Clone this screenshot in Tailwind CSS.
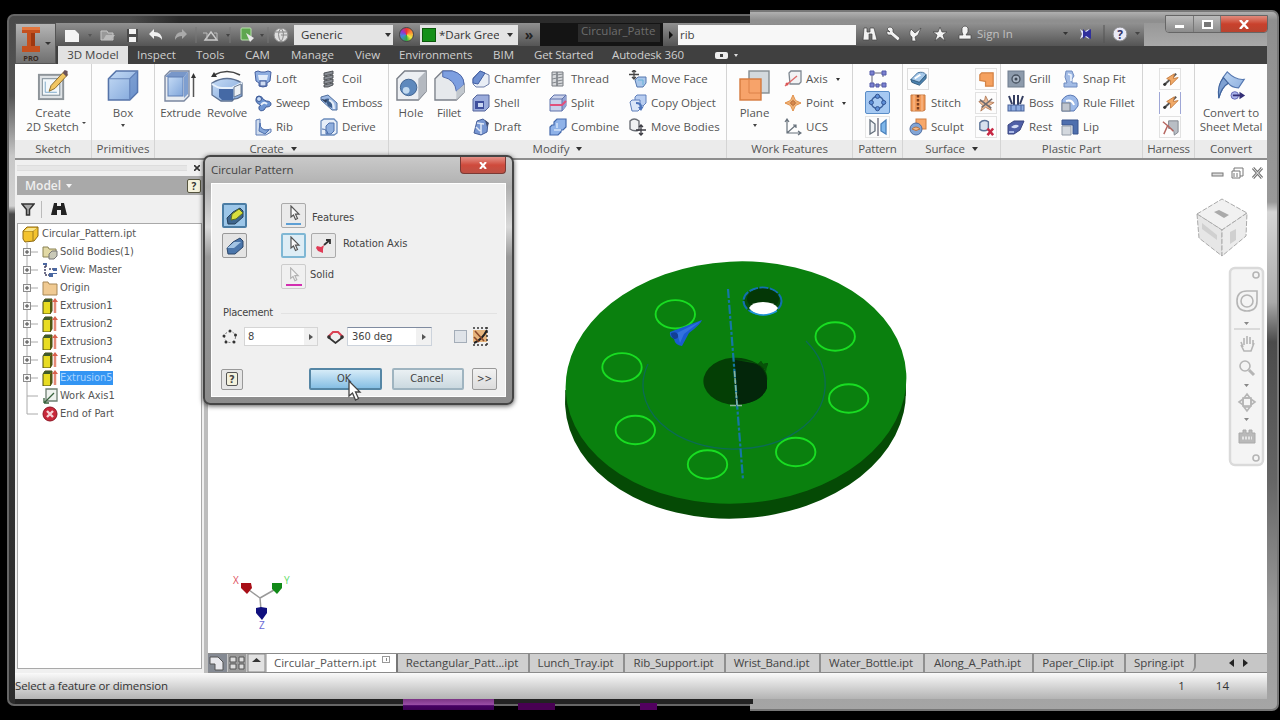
<!DOCTYPE html>
<html lang="en">
<head>
<meta charset="utf-8">
<title>Circular_Pattern.ipt</title>
<script src="https://cdn.jsdelivr.net/npm/@tailwindcss/browser@4"></script>
</head>
<body class="relative h-[720px] w-[1280px] overflow-hidden bg-black font-['Open_Sans','Noto_Sans',sans-serif] text-[11.5px] leading-[14px] text-[#555]">

<!-- shared icon symbols -->
<svg class="absolute size-0">
  <defs>
    <linearGradient id="bl" x1="0" y1="0" x2="1" y2="1"><stop offset="0" stop-color="#c5dbf5"/><stop offset="1" stop-color="#7fa5da"/></linearGradient>
    <linearGradient id="gy" x1="0" y1="0" x2="1" y2="1"><stop offset="0" stop-color="#f2f4f6"/><stop offset="1" stop-color="#b9c2cc"/></linearGradient>
  </defs>
  <symbol id="sketch" viewBox="0 0 32 34"><rect x="1.500" y="6" width="25" height="25" fill="#dfe3e6" stroke="#8d9499" stroke-width="2"/><rect x="5" y="10" width="18" height="17" fill="#f3f8fb" stroke="#7b8a94"/><path d="M8 24V13M8 24h12" stroke="#7fa9c9" fill="none"/><path d="M12 23l2-6L27 3l4 3-13 14z" fill="#f2c662" stroke="#8a6a2a"/><path d="M26 4l2-3 3 1v4l-1 2z" fill="#6b5358"/></symbol>
  <symbol id="box" viewBox="0 0 32 32"><path d="M1 9L9 1h22v22l-8 8H1z" fill="url(#bl)" stroke="#5573a8" stroke-width="1.600"/><path d="M1 9h22v22M23 9l8-8" fill="none" stroke="#6584b8" stroke-width="1.200"/><path d="M23 9l8-8v22l-8 8z" fill="#5b82bf" opacity=".55"/></symbol>
  <symbol id="extrude" viewBox="0 0 33 32"><path d="M1 6L6 1h19v25l-5 5H1z" fill="#e8ecf1" stroke="#7a87a0" stroke-width="1.400"/><path d="M2 6l5-4h17l-4 5H2z" fill="#7897c9"/><rect x="4" y="7" width="15" height="19" fill="url(#bl)" stroke="#5f7fb4"/><path d="M20 7l4-5v22l-4 4z" fill="#7f9fd0"/><path d="M29.500 8v19" stroke="#555" stroke-width="1.500"/><path d="M29.500 3l2.500 5h-5z" fill="#333"/></symbol>
  <symbol id="revolve" viewBox="0 0 34 32"><path d="M4 5Q17-2 30 5" stroke="#444" stroke-width="1.600" fill="none"/><path d="M1 7l3-5 3 5z" fill="#333"/><path d="M2 13Q17 4 32 13v13q-4 3-8 3l-2 2H11l-9-6z" fill="url(#bl)" stroke="#5c7090" stroke-width="1.300"/><path d="M2 14q6 4 10 4h10l10-5" fill="none" stroke="#e8f1fb" stroke-width="2"/><path d="M9 19h14v11H12l-3-3z" fill="#4569a5"/><path d="M24 17l7-3v10l-7 3z" fill="#edf1f5" stroke="#6c7c93"/></symbol>
  <symbol id="loft" viewBox="0 0 18 18"><path d="M1 2l3-1 3 1h4l3-1 3 1-1 9-3 2v3l-4 1-4-1v-3l-3-2z" fill="#8faee0" stroke="#4560a0"/><path d="M4 5h10l-1 5H5z" fill="#e2ecfa"/><rect x="6" y="11" width="6" height="5" fill="#cfdcf2" stroke="#3f5796"/></symbol>
  <symbol id="sweep" viewBox="0 0 18 18"><path d="M2 5q0-3 3-3t4 3l3 2q5 0 5 3t-5 3l-2 3q-4 2-5-1-1-3 2-4Q1 9 2 5z" fill="#6d95d2" stroke="#3c5a98"/><circle cx="5" cy="5" r="2.500" fill="#c9dcf6" stroke="#3c5a98"/><path d="M7 11q3-4 6-1" stroke="#e8f1fb" fill="none" stroke-width="2"/></symbol>
  <symbol id="rib" viewBox="0 0 18 18"><path d="M2 2l4-1v8q2 4 6 3l5-1v3l-5 3H2z" fill="#cfdcee" stroke="#5f7db5"/><path d="M6 5q0 8 9 7l-4 4-6-3z" fill="#85a6d8" stroke="#4d6fae"/></symbol>
  <symbol id="coil" viewBox="0 0 18 18"><path d="M4 3l9-2v3L4 6zm0 4l9-2v3l-9 2zm0 4l9-2v3l-9 2zm0 4l9-2v2l-5 2H4z" fill="#8b8f96" stroke="#45484d" stroke-width=".9"/></symbol>
  <symbol id="emboss" viewBox="0 0 18 18"><path d="M1 3l7-2 9 8v7h-5L1 6z" fill="#9db9e3" stroke="#51709f"/><path d="M5 5q5-2 7 3v6l-4-2z" fill="#3e5f8c"/><path d="M1 5l5 4 1-3z" fill="#2d3f5c"/><path d="M9 6q5 2 5 9" stroke="#e4edf8" stroke-width="2" fill="none"/></symbol>
  <symbol id="derive" viewBox="0 0 18 18"><path d="M1 3l3-2h10l3 3v11l-3 2H1z" fill="#e6eef8" stroke="#6b8cbc" stroke-width="1.300"/><path d="M6 8l3-3h5v8l-3 3H6z" fill="#8eaedd" stroke="#4f71ab"/><path d="M2 11q5 0 6 5" stroke="#4a6da8" fill="none"/></symbol>
  <symbol id="hole" viewBox="0 0 32 32"><path d="M1 9L9 1h22v21l-8 9H1z" fill="#eceff3" stroke="#7b8089" stroke-width="1.500"/><path d="M23 9l8-8v21l-8 9z" fill="#b4b9c0"/><circle cx="13" cy="18" r="8.500" fill="#5e89bd" stroke="#41638f"/><circle cx="10.500" cy="21" r="3.500" fill="#c2daf0"/></symbol>
  <symbol id="fillet" viewBox="0 0 32 32"><path d="M1 9L9 1h9q12 3 13 14v8l-8 8H1z" fill="#e6e9ec" stroke="#7b8089" stroke-width="1.400"/><path d="M9 1h10q12 3 12 14l-8 7Q22 10 9 7z" fill="#7d9fe0" stroke="#4b66aa"/><path d="M23 22l8-7v8l-8 8z" fill="#c2c8ce"/></symbol>
  <symbol id="chamfer" viewBox="0 0 18 18"><path d="M1 8l7-7 9 4v9l-5 3H4l-3-3z" fill="#e9eef6" stroke="#6f7fa8"/><path d="M1 9l7-8 5 2-7 11-5-1z" fill="#6e8fd0" stroke="#425fa3"/></symbol>
  <symbol id="shell" viewBox="0 0 18 18"><path d="M1 5l4-4h12v12l-4 4H1z" fill="#9bacdc" stroke="#54659b"/><rect x="3" y="7" width="9" height="8" fill="#3f4f9c"/><path d="M6 9h5v4H6z" fill="#c8d5f2"/></symbol>
  <symbol id="draft" viewBox="0 0 18 18"><path d="M5 3l6-2 5 4-1 9-6 3-7-2z" fill="#7796d2" stroke="#465f99"/><path d="M9 6v10M5 5l7 1M4 9l4 4" stroke="#dfe8f6" stroke-width="1.500"/><path d="M13 2l4 3-2 4z" fill="#444f70"/></symbol>
  <symbol id="thread" viewBox="0 0 18 18"><path d="M3 2h5v14H3zM8 2h6v14H8z" fill="#d5d7da" stroke="#777b80"/><path d="M3 5l5-1M3 9l5-1M3 13l5-1M8 5l6-1M8 8l6-1M8 11l6-1M8 14l6-1" stroke="#85898e"/></symbol>
  <symbol id="split" viewBox="0 0 18 18"><path d="M1 5l4-4h12v11l-4 5H1z" fill="#c9d1ea" stroke="#5f73ab"/><path d="M13 5l4-4v11l-4 5z" fill="#93a3d2"/><path d="M1 5h12v12M13 5l4-4" stroke="#5f73ab" fill="none"/><path d="M1 11h12l4-4" stroke="#e0507c" stroke-width="2" fill="none"/></symbol>
  <symbol id="combine" viewBox="0 0 18 18"><path d="M5 4l3-3h9v8l-3 3h-2v2l-3 3H1v-8l2-2h2z" fill="#8fb2e8" stroke="#4469ac" stroke-width="1.200"/><path d="M5 12h7M8 5v5" stroke="#d4e3f9" stroke-width="1.500"/></symbol>
  <symbol id="moveface" viewBox="0 0 18 18"><path d="M5 0v9M0 4.500h10M3 2l2-2 2 2M3 7l2 2 2-2" stroke="#444" fill="none" stroke-width="1.300"/><path d="M6 10l3-3h8v6l-3 4H8z" fill="#a9c6ea" stroke="#5477ae"/><path d="M9 10h5v5" stroke="#67b4d8" fill="none"/></symbol>
  <symbol id="copyobj" viewBox="0 0 18 18"><path d="M6 3l2-2h9v8l-3 3H6z" fill="#b8cdf0" stroke="#6180bb"/><path d="M1 8l2-2h8v9l-2 2H3z" fill="#dbe7f8" stroke="#5e7fbb"/><path d="M7 8q6 0 6 5l2-1-3 5-3-4h2q0-3-4-3z" fill="#4c74bb"/></symbol>
  <symbol id="movebody" viewBox="0 0 18 18"><path d="M1 3q4-4 9 0v9q-5 2-9-1z" fill="#f0f2f4" stroke="#6c7077" stroke-width="1.400"/><path d="M12 7v10M7 12h10M10 9l2-2 2 2M10 15l2 2 2-2" stroke="#3d3d44" fill="none" stroke-width="1.300"/></symbol>
  <symbol id="plane" viewBox="0 0 32 32"><rect x="10" y="1" width="20" height="22" fill="#d3d9dd" stroke="#848c91" stroke-width="1.400"/><rect x="1" y="9" width="21" height="21" fill="#f7a36a" stroke="#d5793e" stroke-width="1.400"/><path d="M10 10v13h12" stroke="#dc8148" fill="none"/></symbol>
  <symbol id="axis" viewBox="0 0 18 18"><path d="M5 3l2-2h10v11l-2 2H6z" fill="#f2f3f5" stroke="#7f8891" stroke-width="1.300"/><path d="M1 16L13 6" stroke="#dd6b6b" stroke-width="1.400"/><circle cx="3" cy="14" r="1.500" fill="#d55"/></symbol>
  <symbol id="point" viewBox="0 0 18 18"><path d="M9 1l2.500 5.500L17 9l-5.500 2.500L9 17l-2.500-5.500L1 9l5.500-2.500z" fill="#f6c48b" stroke="#e0904c"/><path d="M9 5.500L12.500 9 9 12.500 5.500 9z" fill="#b96e3d"/><path d="M9 1v16M1 9h16" stroke="#e59a58" stroke-width=".8"/></symbol>
  <symbol id="ucs" viewBox="0 0 18 18"><path d="M3 2v13h13M3 15l9-8M1 4l2-3 2 3M14 13l3 2-3 2M9 7h3v3" stroke="#68727c" fill="none" stroke-width="1.200"/></symbol>
  <symbol id="rect" viewBox="0 0 20 20"><path d="M5 4h10M4 6v9M5 16h10M15 5v3" stroke="#667"/><path d="M2 2h4v4H2zM14 2h4v4h-4zM2 14h4v4H2zM14 14h4v4h-4zM8 15h3v3H8z" fill="#7a80d0" stroke="#535aa8"/></symbol>
  <symbol id="circ" viewBox="0 0 20 20"><circle cx="10" cy="10" r="6.500" stroke="#3a5f9c" stroke-width="1.500" fill="none"/><g fill="#5f8fd6" stroke="#2e5190"><circle cx="10" cy="3.500" r="2.200"/><circle cx="16.500" cy="10" r="2.200"/><circle cx="10" cy="16.500" r="2.200"/><circle cx="3.500" cy="10" r="2.200"/></g></symbol>
  <symbol id="mirror" viewBox="0 0 20 20"><path d="M2 3l5 4v7l-5 3z" fill="#eef1f5" stroke="#65707d" stroke-width="1.300"/><path d="M10 1v18" stroke="#667" stroke-width="1.300"/><path d="M18 3l-5 4v7l5 3z" fill="#7db6ea" stroke="#4a80bb" stroke-width="1.300"/></symbol>
  <symbol id="thick" viewBox="0 0 20 20"><path d="M2 10l7-7q6-2 9 2l-7 8q-5 3-9-3z" fill="#a6c9ea" stroke="#43719b"/><path d="M2 10l9 3 7-8v4l-7 7-8-3z" fill="#4b82b0" stroke="#375e7e"/><path d="M6 9l6-4" stroke="#fff" stroke-width="2"/></symbol>
  <symbol id="stitch" viewBox="0 0 18 18"><path d="M2 1h14v15l-2 1H2z" fill="#f29a58" stroke="#c7783f"/><path d="M9 1v16" stroke="#7d3f1f" stroke-width="2.500" stroke-dasharray="2.500 1.500"/><path d="M5 1v16M13 1v16" stroke="#fac197"/></symbol>
  <symbol id="sculpt" viewBox="0 0 18 18"><rect x="7" y="1" width="10" height="10" fill="#f7a86b" stroke="#cf7f43"/><circle cx="7" cy="11" r="6" fill="#82a5d6" stroke="#4d6a9e"/><path d="M3 11q4-4 8 0-4 3-8 0z" fill="#f4b98a" stroke="#b57444"/></symbol>
  <symbol id="patch" viewBox="0 0 20 20"><path d="M5 3h12v14H9v-5l-6-1V5z" fill="#f5a15f" stroke="#d38346" stroke-width="1.300"/></symbol>
  <symbol id="trim" viewBox="0 0 20 20"><path d="M9 2l3 6 6 1-5 3 2 5-6-3-5 4 2-6-4-4 6-1z" fill="#eebd98" stroke="#b5805e"/><path d="M3 6l12 9M5 14L16 5" stroke="#726d70" stroke-width="1.700"/></symbol>
  <symbol id="delface" viewBox="0 0 20 20"><path d="M3 5q4-4 9-1v8q-5 3-9 0z" fill="#d7e1ee" stroke="#5c7398" stroke-width="1.500"/><path d="M11 11l6 7M17 11l-6 7" stroke="#c62844" stroke-width="2.600"/></symbol>
  <symbol id="grill" viewBox="0 0 18 18"><rect x="1" y="1" width="16" height="16" fill="#8d9bac" stroke="#6f7c8d"/><circle cx="9" cy="9" r="4" fill="#aab6c5" stroke="#46515f" stroke-width="1.300"/><circle cx="9" cy="9" r="1.500" fill="#3f4955"/></symbol>
  <symbol id="boss" viewBox="0 0 18 18"><path d="M2 2l3 8M16 2l-3 8M7 1v10M11 1v10" stroke="#343e60" stroke-width="2"/><rect x="1" y="11" width="16" height="6" fill="#8eace0" stroke="#48629a"/><path d="M4 11v6M9 11v6M14 11v6" stroke="#48629a"/></symbol>
  <symbol id="rest" viewBox="0 0 18 18"><path d="M1 7l6-4h10l-4 9-6 4H1z" fill="#4f5fa7" stroke="#3a4780"/><path d="M4 9q5-4 8-1-4 4-8 1z" fill="#d4dcf3"/><path d="M2 14h5" stroke="#aab9e6" stroke-width="2"/></symbol>
  <symbol id="snap" viewBox="0 0 18 18"><path d="M5 1h6l2 5-2 3v4h5v4H3v-4h3L4 7z" fill="#a3bce5" stroke="#6f8bc0"/><path d="M7 4l3 1v6" stroke="#f0f5fd" stroke-width="1.600" fill="none"/></symbol>
  <symbol id="rule" viewBox="0 0 18 18"><path d="M1 6q5-7 12-4 5 3 4 10l-4 5H1z" fill="#9cb9e8" stroke="#5b79b4"/><path d="M5 7q6-2 8 4" stroke="#fff" stroke-width="2" fill="none"/><rect x="1" y="9" width="8" height="8" fill="#c0c6cf" stroke="#76808e"/></symbol>
  <symbol id="lip" viewBox="0 0 18 18"><path d="M1 2h16v14h-5V7H1z" fill="#4e6fae" stroke="#38548d"/><path d="M1 8h9v9H1z" fill="#d3d8de" stroke="#929ba6"/></symbol>
  <symbol id="har" viewBox="0 0 20 20"><path d="M3 16L16 4" stroke="#555" stroke-width="2"/><path d="M6 9l8-5-1 5 5-1-8 8 0-5z" fill="#f0a967" stroke="#c67e43"/><circle cx="4" cy="15" r="1.600" fill="#333"/></symbol>
  <symbol id="convert" viewBox="0 0 32 34"><path d="M3 30Q1 14 12 2q9 9 18 8l-6 9q-7 0-11-5-7 4-10 16z" fill="url(#bl)" stroke="#5578b1" stroke-width="1.200"/><path d="M3 30Q1 16 8 8l5 6Q6 18 3 30z" fill="#7fa1d2" stroke="#42659d" stroke-width="1.200"/><circle cx="20" cy="27" r="4" fill="#aab3ea" stroke="#6267b4"/><path d="M18 26h7v-3l6 4-6 4v-3h-7z" fill="#343077"/></symbol>
  <symbol id="ext" viewBox="0 0 16 16"><path d="M1 4l2-3h7v12l-2 3H1z" fill="#e8dc22" stroke="#4a4a10"/><path d="M1 4l2-3h7l-2 3z" fill="#3f5a2c"/><path d="M8 4l2-3v12l-2 3z" fill="#4f5812"/><path d="M13 4v11" stroke="#e58a78" stroke-width="2.500"/><path d="M13 0l3 4h-6z" fill="#d8604d"/></symbol>
  <symbol id="folder" viewBox="0 0 16 16"><path d="M1 2h5l1 2h8v11H1z" fill="#f0ca92" stroke="#a78756"/></symbol>
  <symbol id="plus" viewBox="0 0 16 18"><path d="M5 0v18M9 9h7" stroke="#aaa"/><rect x="1.500" y="5.500" width="7" height="7" fill="#f7f7f7" stroke="#8c8c8c"/><path d="M3 9h4M5 7v4" stroke="#444"/></symbol>
  <symbol id="bino" viewBox="0 0 16 14"><path d="M3 1h3v3h4V1h3l3 12h-6V8H6v5H0z" fill="currentColor"/></symbol>
  <symbol id="pick" viewBox="0 0 18 18"><path d="M6 1v11l2.500-2 2 4.500 2-1-2-4.300H14z" fill="#fafafa" stroke="#555" stroke-width="1.200"/></symbol>
  <symbol id="pen" viewBox="0 0 20 20"><path d="M2 12l6-6 7-4 3 3v6l-8 7H3z" fill="#4b76ab" stroke="#2c4668"/><path d="M2 12l7-6 7 0-7 6z" fill="#a3c4e4"/></symbol>
</svg>

<!-- window glass frame and what shows through it -->
<div class="absolute left-[7px] top-[14px] h-[692px] w-[760px] rounded-[7px] border-2 border-[#666] bg-[linear-gradient(180deg,#4a4a4a_0,#555_80px,#c8c8c8_140px,#d2d2d2_190px,#4a4a4a_198px,#333_460px,#2b2b2b_100%)]"></div>
<div class="absolute left-[130px] top-[16px] h-[8px] w-[620px] bg-[linear-gradient(90deg,#4a4a4a00,#292929_8%,#2c2c2c)]"></div>
<div class="absolute left-[750px] top-[10px] h-[701px] w-[529px] rounded-r-[7px] border-2 border-l-0 border-[#777] bg-[linear-gradient(180deg,#b0b0b0_0,#8f8f8f_8px,#999_190px,#d5d5d5_200px,#aaa_290px,#4b4b4b_330px,#666_470px,#9c9c9c_600px,#a5a5a5_100%)]"></div>
<div class="absolute left-[15px] top-[699px] h-[5px] w-[738px] bg-[#222]"></div>
<div class="absolute left-[403px] top-[699px] h-[11px] w-[91px] bg-[linear-gradient(180deg,#7a3484,#9b4fa7_55%,#450062_60%,#3b0052)]"></div>
<div class="absolute left-[518px] top-[703px] h-[7px] w-[37px] bg-[#480052]"></div>
<div class="absolute left-[640px] top-[703px] h-[7px] w-[17px] bg-[#52005f]"></div>

<div class="relative ml-[15px] flex h-[699px] w-[1252px] flex-col pt-[23px]">

  <!-- title bar -->
  <header class="flex h-[41px] shrink-0 bg-[#404040]">
    <button class="flex w-[41px] shrink-0 items-center justify-center gap-1 border border-[#555] bg-linear-to-b from-[#b5b5b5] to-[#707070]">
      <svg class="h-[37px] w-[20px]" viewBox="0 0 20 37"><path d="M1 2h18v6h-5v13h5v6H1v-6h5V8H1z" fill="#c4501e"/><path d="M1 2h18v3H1z" fill="#e2763e"/><path d="M10 8h4v13h-4z" fill="#9e3810"/><text x="10" y="36" font-size="7.500" font-weight="bold" text-anchor="middle" fill="#3a2a22">PRO</text></svg>
      <span class="border-x-[3px] border-t-[3px] border-x-transparent border-t-[#333]"></span>
    </button>
    <div class="flex min-w-0 flex-1 flex-col">
      <div class="flex h-[23px] items-center bg-linear-to-b from-[#919191] to-[#555]">
        <div class="flex h-full w-[238px] shrink-0 items-center pl-[8px]">
          <svg class="h-[20px] w-[229px]" viewBox="64 0 229 20"><path d="M65 5h10l4 4v8H65z" fill="#f4f4f4"/><path d="M88 9h4l-2 3z" fill="#555"/><path d="M101 6h6l1 2h5v7h-12z" fill="#999" stroke="#c8c8c8"/><path d="M103 15l3-5h9l-4 5z" fill="#bbb"/><path d="M127 4h11v13h-11z" fill="#4b4b4b"/><path d="M129 4h7v5h-7zM129 12h7v5h-7z" fill="#f2f2f2"/><path d="M149 9l5-5v3q8 0 8 8-2-4-8-4v3z" fill="#f1f1f1"/><path d="M187 9l-5-5v3q-7 0-7 8 2-4 7-4v3z" fill="#aaa"/><path d="M196 2v16M230 2v16" stroke="#777"/><path d="M205 15l6-8 6 8z" fill="none" stroke="#ccc" stroke-width="1.400"/><path d="M203 8h4v7M214 8h3v7" stroke="#bbb" fill="none"/><path d="M226 9h4l-2 3zM260 9h4l-2 3z" fill="#444"/><rect x="241" y="3" width="10" height="12" rx="1" fill="#5fa64f" stroke="#b9e0ad"/><path d="M246 8l8 5-4 4z" fill="#e8e8e8"/><path d="M268 2v16" stroke="#777"/><circle cx="281" cy="10" r="7" fill="#ddd" stroke="#888"/><path d="M281 3q-5 6 0 14M281 10h7M275 7l12 0M281 3q5 6 0 14" stroke="#888" fill="none"/></svg>
        </div>
        <div class="flex h-[20px] w-[99px] shrink-0 items-center justify-between bg-[#e4e4e4] pl-[7px] pr-[2px] text-[11.5px] text-[#333]">Generic<span class="border-x-[3.5px] border-t-[4px] border-x-transparent border-t-[#333]"></span></div>
        <div class="flex w-[27px] shrink-0 justify-center"><div class="size-[15px] rounded-full border border-[#444] bg-[conic-gradient(#e33,#f93_20%,#ee4_35%,#3a4_50%,#48d_70%,#93c_85%,#e33)]"></div></div>
        <div class="flex h-[20px] w-[98px] shrink-0 items-center bg-[#e4e4e4] pl-[2px] text-[#333]"><span class="size-[14px] shrink-0 border border-[#0c590c] bg-[#159019]"></span><span class="ml-[3px] w-[60px] shrink-0 overflow-hidden whitespace-nowrap text-[11.5px]">*Dark Green</span><span class="ml-[8px] border-x-[3.5px] border-t-[4px] border-x-transparent border-t-[#333]"></span></div>
        <div class="flex h-full w-[22px] shrink-0 items-center justify-center text-[14px] font-bold text-[#222]">»</div>
        <div class="h-full w-[123px] shrink-0 bg-[#141414] pl-[38px] pt-[1px]"><div class="h-[18px] w-[82px] bg-[#2b2b2b] pl-[3px] text-[11.5px] leading-[13px] text-[#6d6d6d]">Circular_Patte</div></div>
        <div class="flex h-full w-[15px] shrink-0 items-center justify-center"><span class="border-y-[4px] border-l-[4px] border-y-transparent border-l-[#111]"></span></div>
        <div class="flex h-[20px] w-[178px] shrink-0 items-center bg-[#f7f7f7] pl-[2px] text-[11.5px] text-[#444]">rib</div>
        <div class="h-full w-[288px] shrink-0">
          <svg class="h-[22px] w-[288px]" viewBox="856 0 288 22"><g fill="#f3f3f3" stroke="#444" stroke-width=".7"><path d="M864 5h3v4h3V5h4l3 12h-5v-6h-3v6h-6z"/><path d="M887 6q3-4 6 0v3l7 6-2 3-7-6h-3q-2-2-1-4l3 1z"/><path d="M911 6l4 4 6-5-3 7-3 2 1 4h-4v-4q-4-2-1-8z"/><path d="M940 4l2 5h5l-4 3 2 6-5-4-5 4 2-6-4-3h5z"/><path d="M962 5q3-4 6 0v4l-2 3h5v4h-12v-4h4l-1-3z"/></g><path d="M1063 9h5l-2.500 3z" fill="#333"/><path d="M1080 6l4 3 5-3-2 5 2 5-5-3-4 3 2-5z" fill="#dfe3ff"/><path d="M1083 6l3 3 5-3v10l-5-3-3 3z" fill="#2f2f9c"/><path d="M1104 2v18" stroke="#555"/><circle cx="1120" cy="11" r="7" fill="#e9e9f6" stroke="#888"/><text x="1120" y="15.500" font-size="12" font-weight="bold" text-anchor="middle" fill="#333369">?</text><path d="M1135 9h5l-2.500 3z" fill="#444"/><text x="977" y="15" font-size="11.500" fill="#c0c0c0">Sign In</text></svg>
        </div>
        <div class="h-full flex-1 bg-linear-to-b from-[#989898] to-[#a9a9a9]"></div>
      </div>
      <nav class="flex h-[18px] items-center bg-[#404040] text-[11.5px] text-[#cfcfcf]">
        <span class="ml-[2px] flex h-full w-[70px] items-center justify-center bg-[#e2e2e2] text-[#444]">3D Model</span>
        <span class="ml-[9px] w-[59px]">Inspect</span><span class="w-[49px]">Tools</span><span class="w-[46px]">CAM</span><span class="w-[64px]">Manage</span><span class="w-[44px]">View</span><span class="w-[94px] tracking-[-0.1px]">Environments</span><span class="w-[41px]">BIM</span><span class="w-[78px] whitespace-nowrap tracking-[-0.15px]">Get Started</span><span class="w-[103px] whitespace-nowrap tracking-[-0.1px]">Autodesk 360</span>
        <span class="flex h-[7px] w-[13px] items-center justify-center rounded-[2px] bg-[#eee]"><span class="size-[3px] bg-[#444]"></span></span><span class="ml-[6px] border-x-[2.5px] border-t-[3px] border-x-transparent border-t-[#ddd]"></span>
      </nav>
    </div>
  </header>

  <!-- ribbon -->
  <section class="flex h-[96px] shrink-0 border-b-2 border-[#8e8e8e] bg-[#fdfdfd] text-[11.5px]">
    <div class="flex w-[77px] flex-col border-r border-[#d4d4d4]">
      <div class="flex h-[76px] flex-col items-center pt-[5px] leading-[14px]"><svg class="h-[33px] w-[32px]"><use href="#sketch"/></svg><span class="mt-[4px]">Create</span><span class="flex items-center gap-[3px] whitespace-nowrap pl-[6px] tracking-[-0.1px]">2D Sketch<i class="mb-2 border-x-[2px] border-t-[2px] border-x-transparent border-t-[#444]"></i></span></div>
      <div class="flex h-[18px] items-center justify-center bg-[#ebebeb]">Sketch</div>
    </div>
    <div class="flex w-[63px] flex-col border-r border-[#d4d4d4]">
      <div class="flex h-[76px] flex-col items-center pt-[6px]"><svg class="h-[31px] w-[32px]"><use href="#box"/></svg><span class="mt-[5px]">Box</span><i class="mt-[4px] border-x-[2.5px] border-t-[3px] border-x-transparent border-t-[#444]"></i></div>
      <div class="flex h-[18px] items-center justify-center bg-[#ebebeb]">Primitives</div>
    </div>
    <div class="flex w-[234px] flex-col border-r border-[#d4d4d4]">
      <div class="flex h-[76px]">
        <div class="flex w-[51px] flex-col items-center pt-[6px]"><svg class="h-[32px] w-[33px]"><use href="#extrude"/></svg><span class="mt-[4px] tracking-[-0.2px]">Extrude</span></div>
        <div class="flex w-[42px] flex-col items-center pt-[6px]"><svg class="h-[32px] w-[34px]"><use href="#revolve"/></svg><span class="mt-[4px] tracking-[-0.2px]">Revolve</span></div>
        <div class="ml-[6px] w-[66px] pt-[3px]">
          <div class="flex h-6 items-center gap-1"><svg class="size-[18px]"><use href="#loft"/></svg>Loft</div>
          <div class="flex h-6 items-center gap-1"><svg class="size-[18px]"><use href="#sweep"/></svg><span class="tracking-[-0.3px]">Sweep</span></div>
          <div class="flex h-6 items-center gap-1"><svg class="size-[18px]"><use href="#rib"/></svg>Rib</div>
        </div>
        <div class="w-[68px] pt-[3px]">
          <div class="flex h-6 items-center gap-1"><svg class="size-[18px]"><use href="#coil"/></svg>Coil</div>
          <div class="flex h-6 items-center gap-1"><svg class="size-[18px]"><use href="#emboss"/></svg><span class="tracking-[-0.3px]">Emboss</span></div>
          <div class="flex h-6 items-center gap-1"><svg class="size-[18px]"><use href="#derive"/></svg><span class="tracking-[-0.2px]">Derive</span></div>
        </div>
      </div>
      <div class="flex h-[18px] items-center justify-center gap-[7px] bg-[#ebebeb] pl-[3px] tracking-[-0.2px]">Create<i class="border-x-[3px] border-t-[4px] border-x-transparent border-t-[#333]"></i></div>
    </div>
    <div class="flex w-[338px] flex-col border-r border-[#d4d4d4]">
      <div class="flex h-[76px]">
        <div class="ml-[4px] flex w-[36px] flex-col items-center pt-[6px]"><svg class="size-[31px]"><use href="#hole"/></svg><span class="mt-[5px]">Hole</span></div>
        <div class="ml-[2px] flex w-[36px] flex-col items-center pt-[6px]"><svg class="size-[31px]"><use href="#fillet"/></svg><span class="mt-[5px] tracking-[-0.2px]">Fillet</span></div>
        <div class="ml-[5px] w-[77px] pt-[3px]">
          <div class="flex h-6 items-center gap-1"><svg class="size-[18px]"><use href="#chamfer"/></svg>Chamfer</div>
          <div class="flex h-6 items-center gap-1"><svg class="size-[18px]"><use href="#shell"/></svg>Shell</div>
          <div class="flex h-6 items-center gap-1"><svg class="size-[18px]"><use href="#draft"/></svg>Draft</div>
        </div>
        <div class="w-[80px] pt-[3px]">
          <div class="flex h-6 items-center gap-1"><svg class="size-[18px]"><use href="#thread"/></svg>Thread</div>
          <div class="flex h-6 items-center gap-1"><svg class="size-[18px]"><use href="#split"/></svg>Split</div>
          <div class="flex h-6 items-center gap-1"><svg class="size-[18px]"><use href="#combine"/></svg>Combine</div>
        </div>
        <div class="w-[97px] whitespace-nowrap pt-[3px]">
          <div class="flex h-6 items-center gap-1"><svg class="size-[18px]"><use href="#moveface"/></svg>Move Face</div>
          <div class="flex h-6 items-center gap-1"><svg class="size-[18px]"><use href="#copyobj"/></svg>Copy Object</div>
          <div class="flex h-6 items-center gap-1"><svg class="size-[18px]"><use href="#movebody"/></svg>Move Bodies</div>
        </div>
      </div>
      <div class="flex h-[18px] items-center justify-center gap-[7px] bg-[#ebebeb]">Modify<i class="border-x-[3px] border-t-[4px] border-x-transparent border-t-[#333]"></i></div>
    </div>
    <div class="flex w-[126px] flex-col border-r border-[#d4d4d4]">
      <div class="flex h-[76px]">
        <div class="ml-[10px] flex w-[35px] flex-col items-center pt-[6px]"><svg class="size-[32px]"><use href="#plane"/></svg><span class="mt-[4px]">Plane</span><i class="mt-[4px] border-x-[2.500px] border-t-[3px] border-x-transparent border-t-[#444]"></i></div>
        <div class="ml-[12px] pt-[3px]">
          <div class="flex h-6 items-center gap-1"><svg class="size-[18px]"><use href="#axis"/></svg>Axis<i class="ml-[4px] border-x-[2.500px] border-t-[3px] border-x-transparent border-t-[#333]"></i></div>
          <div class="flex h-6 items-center gap-1"><svg class="size-[18px]"><use href="#point"/></svg>Point<i class="ml-[4px] border-x-[2.500px] border-t-[3px] border-x-transparent border-t-[#333]"></i></div>
          <div class="flex h-6 items-center gap-1"><svg class="size-[18px]"><use href="#ucs"/></svg>UCS</div>
        </div>
      </div>
      <div class="flex h-[18px] items-center justify-center bg-[#ebebeb] tracking-[-0.1px]">Work Features</div>
    </div>
    <div class="flex w-[50px] flex-col border-r border-[#d4d4d4]">
      <div class="flex h-[76px] flex-col items-center pt-[3px]">
        <div class="flex h-6 w-[25px] items-center justify-center"><svg class="size-[20px]"><use href="#rect"/></svg></div>
        <div class="flex h-[23px] w-[25px] items-center justify-center rounded-[2px] border border-[#5a8dc7] bg-[#a6c9f2]"><svg class="size-[19px]"><use href="#circ"/></svg></div>
        <div class="mt-[2px] flex h-[22px] w-[25px] items-center justify-center border border-[#e6e6e6]"><svg class="size-[20px]"><use href="#mirror"/></svg></div>
      </div>
      <div class="flex h-[18px] items-center justify-center bg-[#ebebeb] tracking-[-0.2px]">Pattern</div>
    </div>
    <div class="flex w-[98px] flex-col border-r border-[#d4d4d4]">
      <div class="flex h-[76px] justify-between pl-[4px] pr-[3px] pt-[3px]">
        <div>
          <div class="flex h-6 items-center"><div class="flex size-[22px] items-center justify-center border border-[#dedede]"><svg class="size-[19px]"><use href="#thick"/></svg></div></div>
          <div class="flex h-6 items-center gap-1 pl-[2px]"><svg class="size-[18px]"><use href="#stitch"/></svg>Stitch</div>
          <div class="flex h-6 items-center gap-1 pl-[2px]"><svg class="size-[18px]"><use href="#sculpt"/></svg>Sculpt</div>
        </div>
        <div class="flex flex-col gap-[2px] pt-[1px]">
          <div class="size-[22px] border border-[#e2e2e2] p-px"><svg class="size-[19px]"><use href="#patch"/></svg></div>
          <div class="size-[22px] border border-[#e2e2e2] p-px"><svg class="size-[19px]"><use href="#trim"/></svg></div>
          <div class="size-[22px] border border-[#e2e2e2] p-px"><svg class="size-[19px]"><use href="#delface"/></svg></div>
        </div>
      </div>
      <div class="flex h-[18px] items-center justify-center gap-[7px] bg-[#ebebeb] tracking-[-0.1px]">Surface<i class="border-x-[3px] border-t-[4px] border-x-transparent border-t-[#333]"></i></div>
    </div>
    <div class="flex w-[142px] flex-col border-r border-[#d4d4d4]">
      <div class="flex h-[76px] whitespace-nowrap pl-[6px] pt-[3px]">
        <div class="w-[54px]">
          <div class="flex h-6 items-center gap-1"><svg class="size-[18px]"><use href="#grill"/></svg>Grill</div>
          <div class="flex h-6 items-center gap-1"><svg class="size-[18px]"><use href="#boss"/></svg><span class="tracking-[-0.2px]">Boss</span></div>
          <div class="flex h-6 items-center gap-1"><svg class="size-[18px]"><use href="#rest"/></svg>Rest</div>
        </div>
        <div>
          <div class="flex h-6 items-center gap-1"><svg class="size-[18px]"><use href="#snap"/></svg>Snap Fit</div>
          <div class="flex h-6 items-center gap-1"><svg class="size-[18px]"><use href="#rule"/></svg>Rule Fillet</div>
          <div class="flex h-6 items-center gap-1"><svg class="size-[18px]"><use href="#lip"/></svg>Lip</div>
        </div>
      </div>
      <div class="flex h-[18px] items-center justify-center bg-[#ebebeb]">Plastic Part</div>
    </div>
    <div class="flex w-[52px] flex-col border-r border-[#d4d4d4]">
      <div class="flex h-[76px] flex-col items-center gap-[2px] pl-[3px] pt-[4px]">
        <div class="size-[22px] border border-[#e2e2e2] p-px"><svg class="size-[19px]"><use href="#har"/></svg></div>
        <div class="size-[22px] border-x border-[#9fa7d6] p-px"><svg class="size-[19px]"><use href="#har"/></svg></div>
        <div class="size-[22px] border border-[#e2e2e2] p-px"><svg class="size-[19px]" viewBox="0 0 20 20"><path d="M8 3h10v12l-4 3q0-8-6-7z" fill="#b9bec5" stroke="#7f858d"/><path d="M2 4l5 4-4 9M7 8l6 6" stroke="#b5655f" stroke-width="1.500" fill="none"/></svg></div>
      </div>
      <div class="flex h-[18px] items-center justify-center bg-[#ebebeb] tracking-[-0.2px]">Harness</div>
    </div>
    <div class="flex w-[72px] flex-col">
      <div class="flex h-[76px] flex-col items-center whitespace-nowrap pt-[6px]"><svg class="h-[32px] w-[32px]"><use href="#convert"/></svg><span class="mt-[4px]">Convert to</span><span class="tracking-[-0.1px]">Sheet Metal</span></div>
      <div class="flex h-[18px] items-center justify-center bg-[#ebebeb]">Convert</div>
    </div>
  </section>

  <main class="flex h-[513px] shrink-0">
    <!-- model browser -->
    <aside class="flex w-[189px] flex-col bg-[#f0f0f0] pl-[2px]">
      <div class="flex h-[16px] items-center justify-between pr-[4px]"><span class="h-[6px] w-[170px] border-y border-[#ddd] bg-[#e6e6e6]"></span><svg class="size-[6px]" viewBox="0 0 6 6"><path d="M0 0l6 6M6 0L0 6" stroke="#333" stroke-width="1.600"/></svg></div>
      <div class="flex h-[19px] items-center bg-[#a9a9a9] pl-[8px] pr-[3px] text-[12px] font-semibold text-[#efefef]">Model<i class="ml-[5px] border-x-[3px] border-t-[4px] border-x-transparent border-t-[#f4f4f4]"></i><span class="ml-auto flex size-[14px] items-center justify-center rounded-[2px] border border-[#55543f] bg-[#f5f2dc] text-[10px] font-bold leading-none text-[#333]">?</span></div>
      <div class="flex h-[28px] items-center pl-[4px] text-[#222]">
        <svg class="h-[13px] w-[14px]" viewBox="0 0 14 13"><path d="M1 1h12L8.500 6.500V12h-3V6.500z" fill="#aaa" stroke="#333" stroke-width="1.500"/></svg><span class="ml-[6px] h-[17px] w-px bg-[#bbb]"></span><svg class="ml-[9px] h-[14px] w-[16px]"><use href="#bino"/></svg>
      </div>
      <div class="h-[446px] w-[185px] border border-[#a9a9a9] bg-white pt-px font-['DejaVu_Sans_Condensed','DejaVu_Sans',sans-serif] text-[11px] tracking-[-0.03px] text-[#555]">
        <div class="flex h-[18px] items-center pl-[4px]"><svg class="mr-[3px] size-[17px]" viewBox="0 0 17 17"><path d="M1 5l4-4h11v9l-4 5-9 1-2-3z" fill="#f4c32e" stroke="#8d6912"/><path d="M1 5h10v10M11 5l5-4" fill="none" stroke="#9d7a1c"/><path d="M2 5l4-3h9l-4 3z" fill="#fbe68a"/></svg>Circular_Pattern.ipt</div>
        <div class="flex h-[18px] items-center pl-[4px]"><svg class="h-[18px] w-[16px]"><use href="#plus"/></svg><svg class="ml-[4px] mr-[2px] size-[16px]" viewBox="0 0 16 16"><path d="M1 3h5l1 2h7v8H1z" fill="#e2d9a5" stroke="#8a8254"/><path d="M7 10l3-3h5v5l-3 3H7z" fill="#c9c9b8" stroke="#777"/></svg>Solid Bodies(1)</div>
        <div class="flex h-[18px] items-center pl-[4px]"><svg class="h-[18px] w-[16px]"><use href="#plus"/></svg><svg class="ml-[4px] mr-[2px] size-[16px]" viewBox="0 0 16 16"><path d="M3 1v3h3M3 4v9h4M7 7h4" stroke="#446" fill="none" stroke-dasharray="2 1" stroke-width="1.500"/><path d="M1 1h4v2H1zM11 6h4v3h-4zM7 11h4v4H7zM11 11h4v1h-4z" fill="#4a68a2"/></svg><span class="tracking-[-0.15px]">View: Master</span></div>
        <div class="flex h-[18px] items-center pl-[4px]"><svg class="h-[18px] w-[16px]"><use href="#plus"/></svg><svg class="ml-[4px] mr-[2px] size-[16px]"><use href="#folder"/></svg>Origin</div>
        <div class="flex h-[18px] items-center pl-[4px]"><svg class="h-[18px] w-[16px]"><use href="#plus"/></svg><svg class="ml-[4px] mr-[2px] size-[16px]"><use href="#ext"/></svg>Extrusion1</div>
        <div class="flex h-[18px] items-center pl-[4px]"><svg class="h-[18px] w-[16px]"><use href="#plus"/></svg><svg class="ml-[4px] mr-[2px] size-[16px]"><use href="#ext"/></svg>Extrusion2</div>
        <div class="flex h-[18px] items-center pl-[4px]"><svg class="h-[18px] w-[16px]"><use href="#plus"/></svg><svg class="ml-[4px] mr-[2px] size-[16px]"><use href="#ext"/></svg>Extrusion3</div>
        <div class="flex h-[18px] items-center pl-[4px]"><svg class="h-[18px] w-[16px]"><use href="#plus"/></svg><svg class="ml-[4px] mr-[2px] size-[16px]"><use href="#ext"/></svg>Extrusion4</div>
        <div class="flex h-[18px] items-center pl-[4px]"><svg class="h-[18px] w-[16px]"><use href="#plus"/></svg><svg class="ml-[4px] mr-[2px] size-[16px]"><use href="#ext"/></svg><span class="bg-[#3395f3] text-[#a8d3ff]">Extrusion5</span></div>
        <div class="flex h-[18px] items-center pl-[4px]"><svg class="h-[18px] w-[16px]" viewBox="0 0 16 18"><path d="M5 0v18M5 9h11" stroke="#aaa"/></svg><svg class="ml-[4px] mr-[2px] size-[16px]" viewBox="0 0 16 16"><path d="M4 1h11v12H4z" fill="#eef2ee" stroke="#6e7f72" stroke-width="1.300"/><path d="M2 15L12 5M2 15h5M2 10v5" stroke="#37623c" stroke-width="1.300"/></svg>Work Axis1</div>
        <div class="flex h-[18px] items-center pl-[4px]"><svg class="h-[18px] w-[16px]" viewBox="0 0 16 18"><path d="M5 0v9h11" stroke="#aaa" fill="none"/></svg><svg class="ml-[4px] mr-[2px] size-[16px]" viewBox="0 0 16 16"><circle cx="8" cy="8" r="7" fill="#c8283a" stroke="#8d1322"/><path d="M5 5l6 6M11 5l-6 6" stroke="#f6d3d6" stroke-width="2.400"/></svg>End of Part</div>
      </div>
    </aside>

    <!-- graphics area -->
    <div class="flex flex-1 flex-col border-l-4 border-[#bdbdbd] bg-white">
      <div class="h-[493px]">
        <svg class="h-[493px] w-[1059px]" viewBox="208 160 1059 493">
          <g stroke="#777" fill="none"><rect x="1212" y="173" width="11" height="3" fill="#ddd"/><path d="M1232 171h8v7h-8zM1234 171v-3h9v8h-3M1234 173v4M1237 173v4"/><path d="M1253 168l9 10M1262 168l-9 10" stroke-width="3"/><path d="M1253 168l9 10M1262 168l-9 10" stroke="#eee"/></g>
          <g stroke="#aaa" stroke-dasharray="5 1.500" fill="#eee"><path d="M1197 214l25-15 25 14-25 17z" fill="#f1f1f1"/><path d="M1197 214l25 16v26l-23-18z" fill="#e6e6e6"/><path d="M1247 213l-25 17v26l24-20z" fill="#ececec"/></g>
          <path d="M1214 212l5-2 10 5-5 3z" fill="#aaa"/><path d="M1202 223l15 12v5l-15-11z" fill="#d0d0d0"/><path d="M1230 232l6-3v11l-6 4z" fill="#d0d0d0"/>
          <rect x="1230" y="268" width="33" height="197" rx="5" fill="#f4f4f4" stroke="#dadada" stroke-width="2.500"/>
          <g fill="none" stroke="#b5b5b5" stroke-width="1.600"><circle cx="1256" cy="275" r="3"/><circle cx="1256" cy="458" r="3"/><path d="M1247 291h10v10q0 10-10 10t-10-10 10-10z"/><circle cx="1247" cy="301" r="6"/><path d="M1234 329h26" stroke="#d4d4d4"/><path d="M1241 345l3 6h7l3-8M1244 345v-7M1247 344v-8M1250 344v-7M1253 345v-5M1241 342l2 5"/><circle cx="1245" cy="366" r="5"/><path d="M1249 370l5 5" stroke-width="3"/><path d="M1247 394l3 4h-6zM1247 411l-3-4h6zM1239 402l4-3v6zM1255 402l-4-3v6z"/><rect x="1243" y="398" width="8" height="8"/></g>
          <path d="M1239 433h4v-3h3v3h3v-3h3v3h3v10h-16z" fill="#b9b9b9" stroke="#aaa"/><path d="M1242 438h10" stroke="#e4e4e4" stroke-width="3" stroke-dasharray="2 1"/>
          <path d="M1244 322h5l-2.500 3zM1244 384h5l-2.500 3zM1244 418h5l-2.500 3z" fill="#888"/>

          <!-- disc -->
          <g fill="#054a05"><ellipse cx="735.500" cy="397.500" rx="170.500" ry="121" transform="rotate(-3 735.500 397.500)"/><path d="M565.300 390l.3 15 340-9 .3-18z"/></g>
          <ellipse cx="736" cy="382.500" rx="170.500" ry="121" fill="#0a800e" transform="rotate(-3 736 382.500)"/>
          <path d="M648 364A90 64 0 0 0 737 449 90 64 0 0 0 825 388Q827 362 806 341" fill="none" stroke="#0c6b55" stroke-width="1.300"/>
          <path d="M767 388A32.500 23.500 0 1 1 758 364l3-3 2 3 5-1-1 4-3 2q4 5 3 12z" fill="#043f05"/>
          <path d="M735 360q31 0 32 22v6q-5 15-32 17z" fill="#03260a"/>
          <path d="M736 360q24 0 30 12l1-6 1-3-5 1-2-3-3 3z" fill="#075209"/>
          <g fill="none" stroke="#19dd22" stroke-width="1.900"><ellipse cx="675.300" cy="314.300" rx="19.700" ry="14.200"/><ellipse cx="622" cy="367.300" rx="19.700" ry="14.200"/><ellipse cx="635.300" cy="430" rx="19.700" ry="14.200"/><ellipse cx="707.500" cy="464.500" rx="19.700" ry="14.200"/><ellipse cx="795.700" cy="452" rx="19.700" ry="14.200"/><ellipse cx="848.700" cy="398.500" rx="19.700" ry="14.200"/><ellipse cx="835.200" cy="336.500" rx="19.700" ry="14.200"/></g>
          <ellipse cx="762.500" cy="301" rx="19" ry="13.500" fill="#074d0a" stroke="#1270b0" stroke-width="2" stroke-dasharray="9 1.500"/>
          <ellipse cx="763" cy="299" rx="16" ry="10.500" fill="#043706"/><path d="M749 308q3-6 14-6t15 6q-4 7-14 7t-15-7z" fill="#fff"/><path d="M750 311q13 8 27 0" stroke="#2196d8" stroke-width="1.500" fill="none"/>
          <path d="M670 332l32-12q-1 4-13 13l-7 13q-7-1-8-7-5-2-4-7z" fill="#1a5cd0"/><path d="M677 333l24-12-17 13-4 9z" fill="#3272de"/><path d="M671 333q6-2 7 2t-4 4q-3-2-3-6z" fill="#123f96"/>
          <path d="M728 289l15 191" stroke="#1577a5" stroke-width="2.200" stroke-dasharray="9 2 3 2"/><path d="M734.500 371l2.500 34M730 405.500h12" stroke="#8bb49a" stroke-width="1.500" stroke-dasharray="6 1"/>

          <!-- orientation triad -->
          <path d="M260 598l-11-8M260 598l14-8M260 598l1 12" stroke="#999" stroke-width="1.500"/><path d="M241 583h10l1 5-5 6-6-6z" fill="#a80f17"/><path d="M272 583h10v5l-5 6-5-5z" fill="#118a18"/><path d="M256 608l5-1 6 1v5l-5 7-6-7z" fill="#10107e"/>
          <text x="233" y="584" font-size="10" fill="#e0525d">X</text><text x="284" y="584" font-size="10" fill="#5cdc67">Y</text><text x="259" y="629" font-size="10" fill="#6a6ad6">Z</text>
        </svg>
      </div>
      <div class="flex h-[20px] border-y border-[#8b8b8b] bg-[#c6c6c6] text-[11.5px] tracking-[-0.15px] text-[#444]">
        <svg class="h-[18px] w-[59px] shrink-0" viewBox="207 0 59 18"><rect x="207" width="19" height="18" fill="#858a93"/><path d="M209 3h8l5 5v8h-8v-6h-5z" fill="#e8e8ec" stroke="#555"/><rect x="227" width="18" height="18" fill="#9b9b9b"/><path d="M229 3h6v5h-6zM238 3h5v5h-5zM229 10h6v5h-6zM238 10h5v5h-5z" fill="#ddd" stroke="#555"/><rect x="247" width="17" height="18" fill="#e2e2e2" stroke="#888"/><path d="M251 8l4.500-4 4.500 4z" fill="#333"/></svg>
        <div class="flex w-[131px] items-center border-r-2 border-[#777] bg-white pl-[7px] text-[11.5px] tracking-[-0.05px] text-[#555]">Circular_Pattern.ipt<span class="mb-[7px] ml-[6px] flex h-[7px] w-[8px] items-center justify-center border border-[#999]"><span class="h-[3px] w-px bg-[#888]"></span></span></div>
        <div class="flex w-[132px] items-center justify-center rounded-bl-md border-r-2 border-[#8f8f8f] bg-[#cfcfcf] pr-[2px] tracking-[-0.05px] whitespace-nowrap">Rectangular_Patt...ipt</div>
        <div class="flex w-[95px] items-center justify-center border-r-2 border-[#8f8f8f] bg-[#cfcfcf] pr-[2px]">Lunch_Tray.ipt</div>
        <div class="flex w-[101px] items-center justify-center border-r-2 border-[#8f8f8f] bg-[#cfcfcf] pr-[2px]">Rib_Support.ipt</div>
        <div class="flex w-[95px] items-center justify-center border-r-2 border-[#8f8f8f] bg-[#cfcfcf] pr-[2px]">Wrist_Band.ipt</div>
        <div class="flex w-[104px] items-center justify-center border-r-2 border-[#8f8f8f] bg-[#cfcfcf] pr-[2px]">Water_Bottle.ipt</div>
        <div class="flex w-[109px] items-center justify-center border-r-2 border-[#8f8f8f] bg-[#cfcfcf] pr-[2px]">Along_A_Path.ipt</div>
        <div class="flex w-[92px] items-center justify-center border-r-2 border-[#8f8f8f] bg-[#cfcfcf] pr-[2px]">Paper_Clip.ipt</div>
        <div class="flex w-[70px] items-center justify-center rounded-br-md border-r-2 border-[#8f8f8f] bg-[#cfcfcf] pr-[2px]">Spring.ipt</div>
        <div class="flex items-center gap-[9px] pl-[33px]"><i class="border-y-[4px] border-r-[5px] border-y-transparent border-r-[#222]"></i><i class="border-y-[4px] border-l-[5px] border-y-transparent border-l-[#222]"></i></div>
      </div>
    </div>
  </main>

  <footer class="flex h-[26px] shrink-0 items-center bg-linear-to-b from-[#fafafa] to-[#b4b4b4] text-[11.5px] text-[#333]">
    <span class="tracking-[-0.15px]">Select a feature or dimension</span><span class="ml-auto mr-[31px]">1</span><span class="mr-[38px]">14</span>
  </footer>
</div>

<!-- window buttons -->
<div class="absolute left-[1165px] top-[15px] flex h-[18px] w-[103px] overflow-hidden rounded-b-[4px] border border-[#666] bg-[#aaa]">
  <div class="flex w-[28px] items-end justify-center border-r border-[#777] bg-linear-to-b from-[#bbb] to-[#8c8c8c] pb-[4px]"><span class="h-[3px] w-[9px] bg-white"></span></div>
  <div class="flex w-[27px] items-center justify-center border-r border-[#777] bg-linear-to-b from-[#bbb] to-[#8c8c8c]"><span class="h-[9px] w-[11px] border-2 border-white bg-[#777]"></span></div>
  <div class="flex flex-1 items-center justify-center bg-linear-to-b from-[#e08a7c] via-[#c9412c] to-[#b8432f]"><svg class="h-[9px] w-[10px]" viewBox="0 0 10 9"><path d="M1 0l8 9M9 0L1 9" stroke="#fff" stroke-width="2.400"/></svg></div>
</div>

<!-- circular pattern dialog -->
<div class="absolute left-[203px] top-[155px] flex h-[250px] w-[311px] flex-col rounded-[7px] border-2 border-[#454545] bg-[linear-gradient(180deg,#c9c9c9_0,#b0b0b0_30px,#d9d9d9_70px,#999_100px,#8c8c8c_100%)] px-[6px] pb-[6px] font-['DejaVu_Sans_Condensed','DejaVu_Sans',sans-serif] text-[11px] tracking-[-0.05px] text-[#444] shadow-[0_1px_5px_#000a]">
  <div class="flex h-[26px] shrink-0 items-start justify-between">
    <span class="pt-[6px] font-['Open_Sans',sans-serif] text-[11.5px] tracking-[-0.1px] text-[#444]">Circular Pattern</span>
    <span class="flex h-[17px] w-[46px] items-center justify-center rounded-b-[4px] border border-t-0 border-[#7a3a35] bg-linear-to-b from-[#e39088] via-[#cf4a3c] to-[#bd5145]"><svg class="h-[7px] w-[8px]" viewBox="0 0 8 7"><path d="M1 0l6 7M7 0L1 7" stroke="#fff" stroke-width="2"/></svg></span>
  </div>
  <div class="flex flex-1 flex-col border border-white bg-[#f0f0f0] pl-[9px] pr-[8px] pt-[19px]">
    <div class="flex h-[86px]">
      <div class="flex w-[60px] flex-col gap-[5px] pl-[1px]">
        <div class="flex size-[25px] items-center justify-center rounded-[2px] border-2 border-[#4b7da4] bg-[#9cc6e8]"><svg class="size-[20px]" viewBox="0 0 20 20"><path d="M2 12l6-6 7-4 3 3v6l-8 7H3z" fill="#3e668e" stroke="#243e58"/><path d="M7 8l7-5 4 4-7 6-5 1z" fill="#d8df3e" stroke="#5b7024"/></svg></div>
        <div class="flex size-[25px] items-center justify-center rounded-[2px] border border-[#999] bg-[#e4e4e4]"><svg class="size-[20px]"><use href="#pen"/></svg></div>
      </div>
      <div class="flex flex-col">
        <div class="flex h-[25px] items-center gap-[6px]"><div class="flex size-[25px] flex-col items-center rounded-[2px] border border-[#aaa] bg-[#eaeaea] pt-px"><svg class="size-[18px]"><use href="#pick"/></svg><span class="h-[2px] w-[15px] bg-[#5d9fd4]"></span></div><span class="pt-[4px]">Features</span></div>
        <div class="mt-[5px] flex h-[25px] items-center"><div class="flex size-[25px] flex-col items-center rounded-[2px] border-2 border-[#7fb7d4] bg-[#deedf5] pt-px"><svg class="size-[18px]"><use href="#pick"/></svg></div><div class="ml-[5px] flex size-[25px] items-center justify-center rounded-[2px] border border-[#aaa] bg-[#eaeaea]"><svg class="size-[19px]" viewBox="0 0 19 19"><path d="M3 10l4 1 3-2-1 4 0 4-5-2-2-3z" fill="#e03a55"/><path d="M10 9l6-5M12 4h4v4" stroke="#333" stroke-width="1.800" fill="none"/></svg></div><span class="ml-[7px] pb-[3px]">Rotation Axis</span></div>
        <div class="mt-[6px] flex h-[25px] items-center gap-[4px]"><div class="flex size-[25px] flex-col items-center rounded-[2px] border border-[#ccc] bg-[#f0f0f0] pt-[2px]"><svg class="size-[17px] opacity-40"><use href="#pick"/></svg><span class="h-[2px] w-[16px] bg-[#d22fb0]"></span></div><span class="pb-[4px]">Solid</span></div>
      </div>
    </div>
    <div class="mt-[17px] flex h-[14px] items-center gap-[8px] pl-[2px] tracking-[-0.25px]">Placement<span class="h-px flex-1 bg-[#e2e2e2]"></span></div>
    <div class="mt-[7px] flex h-[19px] items-center">
      <svg class="size-[18px]" viewBox="0 0 18 18"><circle cx="9" cy="9" r="5.500" stroke="#777" stroke-dasharray="2 2" fill="none"/><g fill="#333"><circle cx="9" cy="3" r="1.500"/><circle cx="14.500" cy="7" r="1.500"/><circle cx="13" cy="14" r="1.500"/><circle cx="5" cy="14" r="1.500"/><circle cx="3" cy="8" r="1.500"/></g></svg>
      <div class="ml-[5px] flex h-[19px] w-[74px] items-center border border-[#d5d5d5] bg-white pl-[3px]">8<span class="ml-auto flex h-full w-[13px] items-center justify-center bg-[#f1f1f1]"><i class="border-y-[3px] border-l-[4px] border-y-transparent border-l-[#555]"></i></span></div>
      <svg class="ml-[9px] h-[14px] w-[17px]" viewBox="0 0 17 14"><path d="M1 7l5-5h5l5 5" stroke="#db4254" stroke-width="2" fill="none"/><path d="M1 7l7.500 6L16 7" stroke="#333" stroke-width="1.700" fill="none"/><circle cx="2" cy="7" r="1.800" fill="#333"/><circle cx="15" cy="7" r="1.800" fill="#333"/></svg>
      <div class="ml-[3px] flex h-[19px] w-[85px] items-center border border-[#ccd3dc] border-t-[#7f8ba0] bg-white pl-[4px]">360 deg<span class="ml-auto flex h-full w-[15px] items-center justify-center bg-[#f1f1f1]"><i class="border-y-[3px] border-l-[4px] border-y-transparent border-l-[#555]"></i></span></div>
      <span class="ml-[22px] size-[13px] shrink-0 border border-[#a4adb8] bg-[#dfe3e8]"></span>
      <svg class="ml-[5px] h-[21px] w-[17px] shrink-0" viewBox="0 0 17 21"><path d="M1 4h14v12H1z" fill="#e7b57d"/><path d="M1 2h14M1 19h15M15 1v18" stroke="#333" stroke-width="1.500" stroke-dasharray="2 2"/><path d="M2 17q8-3 13-13" stroke="#222" stroke-width="2" fill="none"/><path d="M3 5l9 10M2 11l5 5" stroke="#8b4a2b" stroke-width="1.600"/></svg>
    </div>
    <div class="mt-[22px] flex h-[22px] items-center text-[11px]">
      <span class="flex h-[21px] w-[22px] items-center justify-center rounded-[2px] border border-[#999] bg-[#e6e6e6]"><span class="flex h-[14px] w-[12px] items-center justify-center rounded-[2px] border border-[#555] bg-[#f3f1dc] text-[11px] font-bold leading-none">?</span></span>
      <span class="ml-[66px] flex h-[22px] w-[73px] items-center justify-center rounded-[2px] border-2 border-[#5586a5] bg-linear-to-b from-[#d6ecf8] to-[#86bfe4] pr-[2px]">OK</span>
      <span class="ml-[10px] flex h-[22px] w-[73px] items-center justify-center rounded-[2px] border-2 border-[#9fb4c0] bg-linear-to-b from-[#eaf0f3] to-[#cbd9e0] pr-[2px]">Cancel</span>
      <span class="ml-[8px] flex h-[22px] w-[25px] items-center justify-center rounded-[2px] border border-[#999] bg-linear-to-b from-[#f2f2f2] to-[#dcdcdc] text-[10px]">&gt;&gt;</span>
    </div>
  </div>
</div>

<!-- mouse cursor -->
<svg class="absolute left-[347px] top-[380px] h-[21px] w-[15px]" viewBox="0 0 15 21"><path d="M2 1v15l3.500-3 3 7 3-1.500-3-6.500H13z" fill="#fff" stroke="#444" stroke-width="1.300"/></svg>
</body>
</html>
